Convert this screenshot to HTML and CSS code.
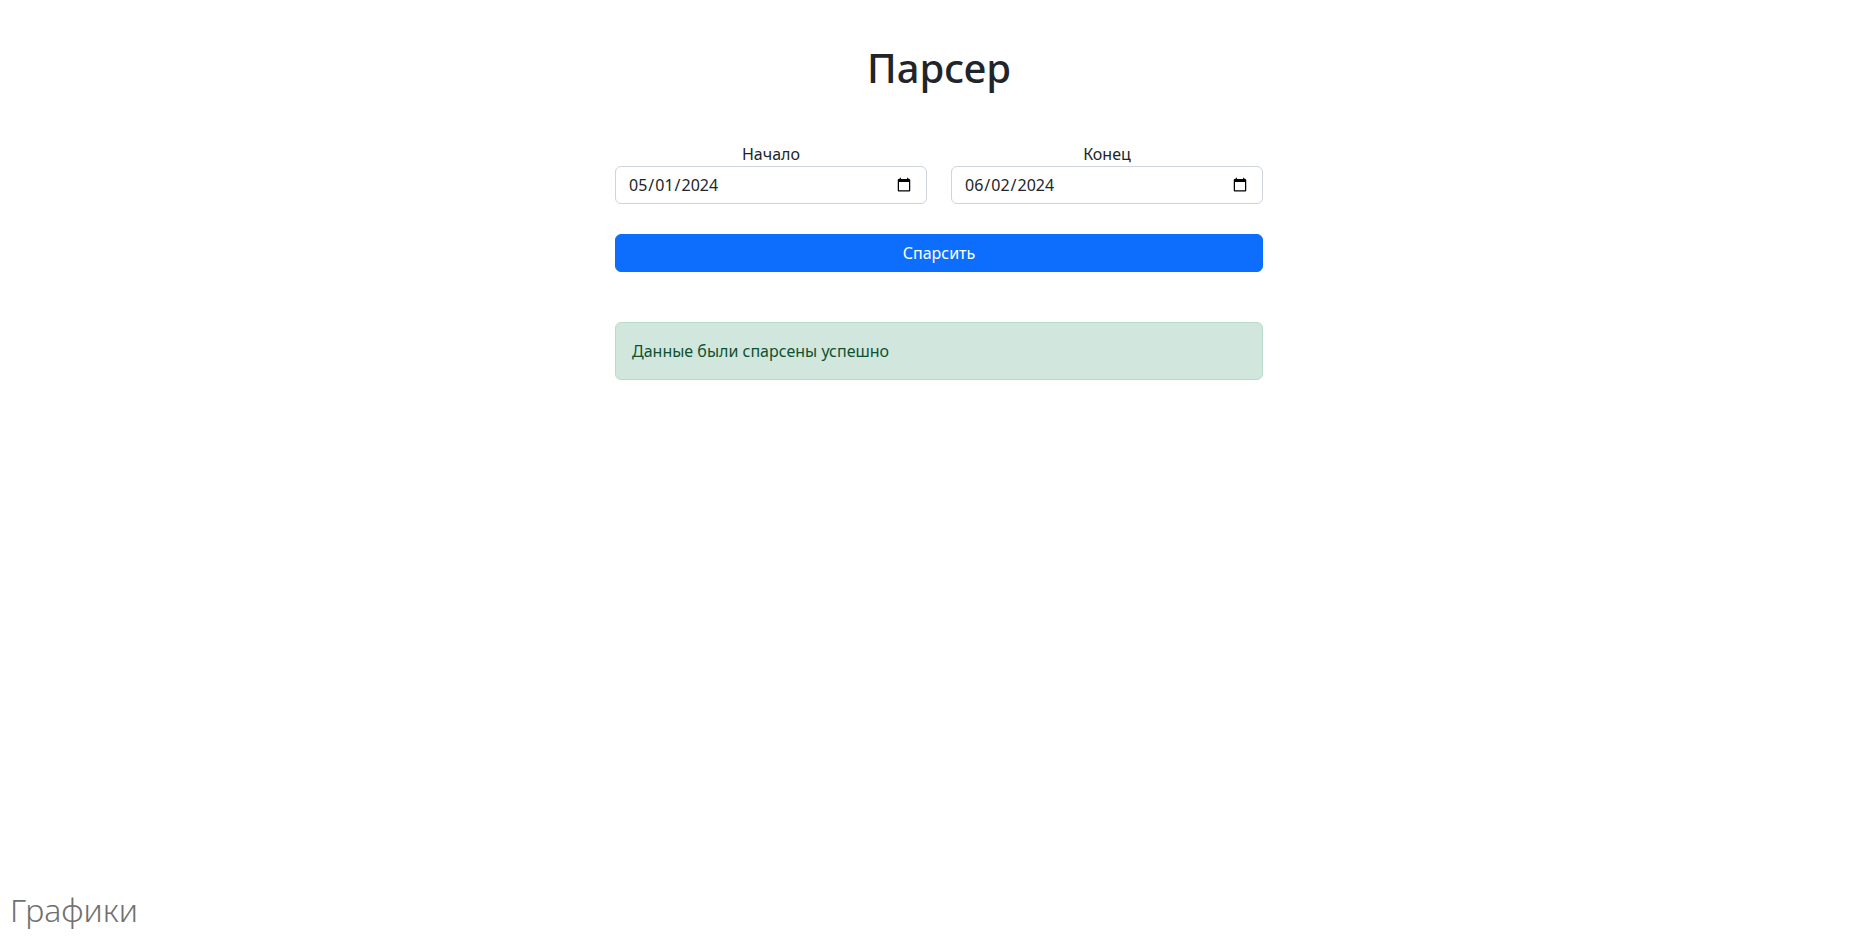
FILE: index.html
```html
<!DOCTYPE html>
<html lang="ru">
<head>
<meta charset="utf-8">
<title>Парсер</title>
<link rel="stylesheet" href="styles.css">
</head>
<body class="page">
  <main class="wrap">
    <div class="content">
      <h1 class="title">Парсер</h1>
      <form class="form">
        <div class="dates">
          <div class="field">
            <label class="label" for="start">Начало</label>
            <input class="input" id="start" type="date" value="2024-05-01">
          </div>
          <div class="field">
            <label class="label" for="end">Конец</label>
            <input class="input" id="end" type="date" value="2024-06-02">
          </div>
        </div>
        <button class="btn" type="button">Спарсить</button>
      </form>
      <div class="alert">Данные были спарсены успешно</div>
    </div>
  </main>
  <footer class="footer">
    <a class="footer-link" href="#">Графики</a>
  </footer>
</body>
</html>
```

FILE: styles.css
```css
* { box-sizing: border-box; }
html, body { margin: 0; padding: 0; }
.page {
  min-height: 100vh;
  display: flex;
  flex-direction: column;
  font-family: "Noto Sans", "Open Sans", sans-serif;
  font-size: 16px;
  line-height: 1.5;
  color: #212529;
  background: #fff;
}
.wrap {
  display: flex;
  justify-content: center;
  padding-left: 17px;
  padding-top: 44px;
}
.content { width: 648px; }
.title {
  margin: 0;
  font-size: 40px;
  line-height: 1.2;
  font-weight: 500;
  text-align: center;
  color: #212529;
}
.form { margin: 50px 0 0; }
.dates {
  display: grid;
  grid-template-columns: 1fr 1fr;
  column-gap: 24px;
}
.field { display: flex; flex-direction: column; }
.label { text-align: center; line-height: 24px; }
.input {
  height: 38px;
  padding: 6px 12px;
  font-family: inherit;
  font-size: 16px;
  line-height: 24px;
  color: #212529;
  background: #fff;
  border: 1px solid #ced4da;
  border-radius: 6px;
}
.btn {
  display: block;
  width: 100%;
  height: 38px;
  margin-top: 30px;
  padding: 6px 12px;
  font-family: inherit;
  font-size: 16px;
  line-height: 24px;
  color: #fff;
  background: #0d6efd;
  border: 1px solid #0d6efd;
  border-radius: 6px;
}
.alert {
  margin-top: 50px;
  padding: 16px;
  line-height: 24px;
  color: #0f5132;
  background: #d1e7dd;
  border: 1px solid #badbcc;
  border-radius: 6px;
}
.footer {
  margin-top: auto;
  padding: 0 0 15px 10px;
}
.footer-link {
  font-size: 32px;
  font-weight: 300;
  line-height: 1.2;
  color: #707070;
  text-decoration: none;
}
```
